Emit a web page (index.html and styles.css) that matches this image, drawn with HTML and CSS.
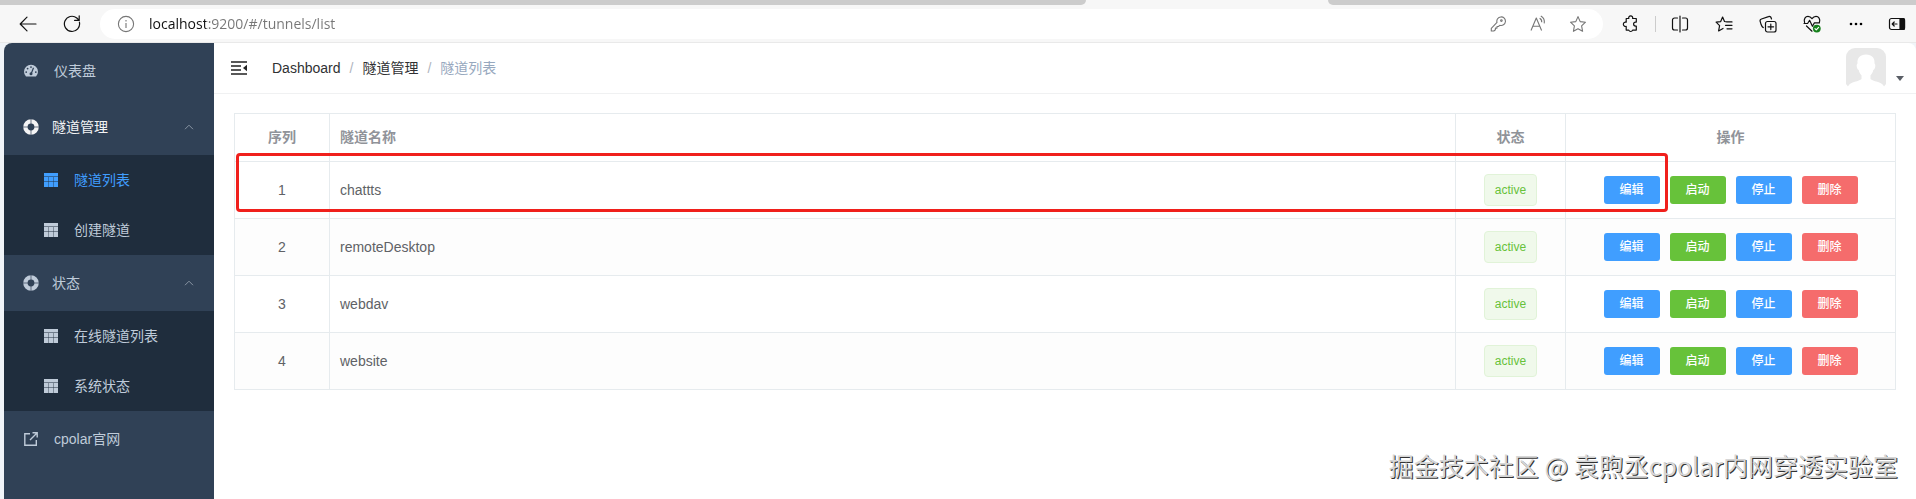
FILE: index.html
```html
<!DOCTYPE html>
<html lang="zh-CN">
<head>
<meta charset="utf-8">
<title>隧道列表</title>
<link rel="stylesheet" href="styles.css">
</head>
<body>
<svg class="defs" aria-hidden="true">
  <symbol id="grid" viewBox="0 0 14 14"><path fill="currentColor" d="M0 0h14v3.400H0zM0 4h4.400v4.600H0zM4.800 4h4.400v4.600H4.800zM9.600 4H14v4.600H9.600zM0 9h4.400v5H0zM4.800 9h4.400v5H4.800zM9.600 9H14v5H9.600z"/></symbol>
  <symbol id="ring" viewBox="0 0 16 16"><circle cx="8" cy="8" r="5.600" fill="none" stroke="currentColor" stroke-width="4.400"/><path d="M8 0v5M8 11v5M0 8h5M11 8h5" stroke="#304156" stroke-width=".7"/></symbol>
  <symbol id="up" viewBox="0 0 10 6"><path d="M1 5.200 5 1.200l4 4" fill="none" stroke="currentColor"/></symbol>
</svg>

<div class="tabstrip"><span class="tabs-left"></span><span class="tabs-right"></span></div>

<header class="toolbar">
  <button class="tool" aria-label="返回"><svg width="18" height="16" viewBox="0 0 18 16" class="line"><path d="M17 8H1.500M8 1.200 1.200 8 8 14.800"/></svg></button>
  <button class="tool" aria-label="刷新"><svg width="18" height="18" viewBox="0 0 18 18" class="line"><path d="M16.400 7.200A7.600 7.600 0 1 1 13.800 3L16 5.200M16.200.8v4.600h-4.600"/></svg></button>
  <div class="omnibox">
    <svg class="info" width="18" height="18" viewBox="0 0 18 18"><circle cx="9" cy="9" r="7.600"/><path d="M9 8v5M9 5v1.400"/></svg>
    <input class="url" type="text" aria-label="地址" value="localhost:9200/#/tunnels/list">
    <button class="field-tool" aria-label="密码"><svg width="16" height="16" viewBox="0 0 16 16"><path d="M7 6.400A4.300 4.300 0 1 1 9.800 9.300L8.400 10.500H7v1.600H5.400v1.600L3.800 15H1.300v-2.600z"/><circle cx="11.400" cy="4.600" r=".8"/></svg></button>
    <button class="field-tool" aria-label="朗读"><svg width="18" height="18" viewBox="0 0 18 18"><path d="M2 15.500 7.300 3l5.300 12.500M3.800 11.300h7M10.600 3.200a4 4 0 0 1 2.100 4M11.800 1a7 7 0 0 1 3.400 7.400"/></svg></button>
    <button class="field-tool" aria-label="收藏此页"><svg width="18" height="18" viewBox="0 0 18 18"><path d="m9 1.600 2.200 5 5.300.6-3.900 3.700 1 5.400L9 13.700l-4.600 2.600 1-5.400L1.500 7.200l5.300-.6z"/></svg></button>
  </div>
  <button class="tool" aria-label="扩展"><svg width="18" height="18" viewBox="0 0 18 18" class="line"><path d="M4.500 3.500h2.300a2 2 0 1 1 3.800 0h3.700v3.600h-.7a2 2 0 1 0 0 4h.7v4h-3.700a2 2 0 0 1-3.800 0H4.200v-3.700a2.200 2.200 0 1 1 0-4.200V3.500z"/></svg></button>
  <span class="divider"></span>
  <button class="tool" aria-label="分屏"><svg width="18" height="18" viewBox="0 0 18 18" class="line"><path d="M6.500 3H3.500a2 2 0 0 0-2 2v8a2 2 0 0 0 2 2h3M11.500 3h3a2 2 0 0 1 2 2v8a2 2 0 0 1-2 2h-3M9 1v16"/></svg></button>
  <button class="tool" aria-label="收藏夹"><svg width="18" height="18" viewBox="0 0 18 18" class="line"><path d="M12 6.900 9.500 6.500 7.600 2 5.700 6.600l-4.600.5 3.500 3.500-1 5.300 4.400-2.500M12 6.900h5M10.500 10.300H17M12 13.800h5"/></svg></button>
  <button class="tool" aria-label="集锦"><svg width="18" height="18" viewBox="0 0 18 18" class="line"><rect x="6.500" y="6.500" width="10.500" height="10.500" rx="2"/><path d="M11.800 9v5.600M9 11.800h5.600M4.300 12.600C3 12 2.600 11 2.200 9.800L1.200 6.500A2 2 0 0 1 2.500 4l7-2.400a2 2 0 0 1 2.600 1.200l.4 1.200"/></svg></button>
  <button class="tool" aria-label="浏览器概要"><svg width="18" height="18" viewBox="0 0 18 18" class="line"><path d="M1.600 7.500C.4 4 2.500 1.400 5 1.400c2 0 3.200 1.200 4 2.300.8-1.100 2-2.300 4-2.300 2.500 0 4.600 2.600 3.400 6.100M1 8.500h3.600l2-3.200 2.800 6 2-3.400h5M3.500 11 9 16.200"/><circle cx="13.800" cy="13.600" r="3.900" class="ok"/><path d="m12 13.600 1.300 1.300 2.300-2.500" class="tick"/></svg></button>
  <button class="tool" aria-label="更多"><svg width="14" height="4" viewBox="0 0 14 4"><circle cx="2" cy="2" r="1.300"/><circle cx="7" cy="2" r="1.300"/><circle cx="12" cy="2" r="1.300"/></svg></button>
  <button class="tool tool-last" aria-label="侧边栏"><svg width="18" height="14" viewBox="0 0 18 14" class="line"><rect x="1.500" y="1.500" width="15" height="11" rx="2"/><path d="M12 1.500h3.500a1 1 0 0 1 1 1v9a1 1 0 0 1-1 1H12z" fill="#111"/><path d="M9 7H4.200M6.200 5l-2 2 2 2"/></svg></button>
</header>

<div class="page">
  <nav class="sidebar">
    <a class="item" href="#/dashboard"><svg class="icon" viewBox="0 0 14 14"><path fill="currentColor" fill-rule="evenodd" d="M2 12.600A7 7 0 1 1 12 12.600zM7 2.200a.9.900 0 1 0 0 1.800.9.900 0 0 0 0-1.800M3.600 3.700a.9.900 0 1 0 0 1.800.9.900 0 0 0 0-1.800M2.200 7.200a.9.900 0 1 0 0 1.800.9.900 0 0 0 0-1.800M11.800 7.200a.9.900 0 1 0 0 1.800.9.900 0 0 0 0-1.800"/><path d="M9.500 3.800 7.300 9.500" stroke="#304156" stroke-width="1.200"/><circle cx="7" cy="9.800" r="1.500" fill="#304156"/></svg><span>仪表盘</span></a>
    <button class="item group current"><svg class="icon"><use href="#ring"/></svg><span>隧道管理</span><svg class="arrow"><use href="#up"/></svg></button>
    <div class="submenu">
      <a class="subitem active" href="#/tunnels/list"><svg class="icon"><use href="#grid"/></svg><span>隧道列表</span></a>
      <a class="subitem" href="#/tunnels/create"><svg class="icon"><use href="#grid"/></svg><span>创建隧道</span></a>
    </div>
    <button class="item group"><svg class="icon"><use href="#ring"/></svg><span>状态</span><svg class="arrow"><use href="#up"/></svg></button>
    <div class="submenu">
      <a class="subitem" href="#/status/online"><svg class="icon"><use href="#grid"/></svg><span>在线隧道列表</span></a>
      <a class="subitem" href="#/status/system"><svg class="icon"><use href="#grid"/></svg><span>系统状态</span></a>
    </div>
    <a class="item" href="#/site"><svg class="icon" viewBox="0 0 14 14"><path fill="none" stroke="currentColor" stroke-width="1.400" d="M6 1.700H.8v11.500h11.500V8M8.500.8h4.700v4.700M13 1 6 8"/></svg><span>cpolar官网</span></a>
  </nav>

  <main class="main">
    <div class="navbar">
      <button class="fold" aria-label="折叠菜单"><svg width="16" height="14" viewBox="0 0 16 14"><path d="M0 1h16M0 5h10M0 9h10M0 13h16" stroke="#222" stroke-width="1.600"/><path d="M16 3.800v6.400L12 7z" fill="#222"/></svg></button>
      <nav class="crumbs"><a href="#/dashboard">Dashboard</a><i>/</i><a href="#/tunnels">隧道管理</a><i>/</i><span>隧道列表</span></nav>
      <button class="user" aria-label="用户菜单">
        <svg width="40" height="40" viewBox="0 0 40 40"><path fill="#e8e8e8" d="M9 0h22a9 9 0 0 1 9 9v27l-2 2.500H2L0 36V9a9 9 0 0 1 9-9z"/><path fill="#fff" d="M20 6.500c-6 0-9 3.500-8.500 9-.1.500-1 .8-.8 2.500.2 2 .8 3.600 2 4 .5 2.500 1.500 4 2.800 5.300v3.700C13.500 33.500 4 33.500 2 38.500V40h36v-1.500c-2-5-11.500-5-13.500-7.500v-3.700c1.300-1.300 2.300-2.800 2.800-5.300 1.200-.4 1.800-2 2-4 .2-1.700-.7-2-.8-2.500.5-5.500-2.500-9-8.500-9z"/></svg>
        <svg class="caret" width="8" height="5" viewBox="0 0 8 5"><path d="M0 0h8L4 5z" fill="#5a5e66"/></svg>
      </button>
    </div>

    <div class="content">
      <table class="tunnels">
        <colgroup><col class="c-index"><col><col class="c-state"><col class="c-ops"></colgroup>
        <thead><tr><th>序列</th><th class="name">隧道名称</th><th>状态</th><th>操作</th></tr></thead>
        <tbody>
          <tr><td>1</td><td class="name">chattts</td><td><span class="tag">active</span></td><td><div class="ops"><button class="btn blue">编辑</button><button class="btn green">启动</button><button class="btn blue">停止</button><button class="btn red">删除</button></div></td></tr>
          <tr><td>2</td><td class="name">remoteDesktop</td><td><span class="tag">active</span></td><td><div class="ops"><button class="btn blue">编辑</button><button class="btn green">启动</button><button class="btn blue">停止</button><button class="btn red">删除</button></div></td></tr>
          <tr><td>3</td><td class="name">webdav</td><td><span class="tag">active</span></td><td><div class="ops"><button class="btn blue">编辑</button><button class="btn green">启动</button><button class="btn blue">停止</button><button class="btn red">删除</button></div></td></tr>
          <tr><td>4</td><td class="name">website</td><td><span class="tag">active</span></td><td><div class="ops"><button class="btn blue">编辑</button><button class="btn green">启动</button><button class="btn blue">停止</button><button class="btn red">删除</button></div></td></tr>
        </tbody>
      </table>
      <div class="marker"></div>
    </div>
  </main>
</div>
<div class="watermark">掘金技术社区 @ 袁煦丞cpolar内网穿透实验室</div>
</body>
</html>
```
FILE: styles.css
```css
* { box-sizing: border-box; }

body {
  margin: 0;
  min-height: 100vh;
  display: flex;
  flex-direction: column;
  background: #f0f4f8;
  font: 14px/20px "Liberation Sans", "Noto Sans CJK SC", sans-serif;
  color: #606266;
}

button { border: 0; background: none; padding: 0; font: inherit; color: inherit; }
a { color: inherit; text-decoration: none; }
svg { display: block; flex: none; }
.defs { display: none; }

/* browser frame */
.tabstrip { display: flex; justify-content: space-between; height: 5px; background: #f7f7f7; }
.tabs-left { width: 1086px; background: #ccc; border-bottom-right-radius: 5px; }
.tabs-right { width: 588px; background: #ccc; border-bottom-left-radius: 5px; }

.toolbar {
  display: flex;
  align-items: center;
  height: 38px;
  padding-left: 6px;
  background: #f7f7f7;
  border-bottom: 1px solid #e9e9e9;
}
.tool { width: 44px; height: 30px; display: flex; align-items: center; justify-content: center; flex: none; color: #111; }
.tool-last { width: 38px; }
.line { fill: none; stroke: #111; stroke-width: 1.2; stroke-linejoin: round; stroke-linecap: round; }
.line .ok { fill: #16801c; stroke: none; }
.line .tick { stroke: #fff; }
.divider { width: 1px; height: 16px; margin: 0 2px; background: #ccc; }
.omnibox {
  flex: 1;
  display: flex;
  align-items: center;
  height: 30px;
  margin: 0 6px;
  padding: 0 5px 0 17px;
  border-radius: 15px;
  background: #fff;
}
.info, .field-tool svg { fill: none; stroke: #767676; stroke-width: 1.1; stroke-linejoin: round; }
.url {
  flex: 1;
  min-width: 0;
  height: 24px;
  margin-left: 14px;
  padding: 0;
  border: 0;
  outline: 0;
  font: 14px/24px "Open Sans", sans-serif;
  color: transparent;
  background: linear-gradient(90deg, #111 57px, #767676 57px);
  -webkit-background-clip: text;
  background-clip: text;
}
.field-tool { width: 40px; height: 30px; display: flex; align-items: center; justify-content: center; }

/* application */
.page { flex: 1; display: flex; margin-left: 4px; border-radius: 8px 8px 0 0; overflow: hidden; background: #fff; }

.sidebar { width: 210px; flex: none; background: #304156; color: #bfcbd9; }
.item { display: flex; align-items: center; width: 100%; height: 56px; padding: 0 20px; gap: 16px; text-align: left; }
.item.group { padding-left: 19px; gap: 13px; }
.icon { width: 14px; height: 14px; }
.group .icon { width: 16px; height: 16px; }
.item.current { color: #f4f4f5; }
.arrow { width: 10px; height: 6px; margin-left: auto; color: #8793a2; }
.submenu { background: #1f2d3d; }
.subitem { display: flex; align-items: center; height: 50px; padding-left: 40px; gap: 16px; }
.subitem.active { color: #409eff; }

.main { flex: 1; min-width: 0; }
.navbar { display: flex; align-items: center; height: 51px; padding: 0 12px 0 17px; border-bottom: 1px solid #f0f1f2; }
.fold { margin-right: 25px; }
.crumbs { display: flex; flex: 1; color: #303133; }
.crumbs i { margin: 0 9px; font-style: normal; color: #b0b5be; }
.crumbs span { color: #97a8be; }
.user { display: flex; align-items: flex-end; gap: 10px; }
.caret { margin-bottom: 7px; }

.content { position: relative; margin: 19px 20px 20px; }
.tunnels { width: 100%; table-layout: fixed; border-collapse: collapse; text-align: center; }
.c-index { width: 95px; }
.c-state { width: 110px; }
.c-ops { width: 330px; }
.tunnels th, .tunnels td { padding: 0 10px; border: 1px solid #e6ebee; font-size: 14px; }
.tunnels th { height: 48px; padding-bottom: 2px; color: #909399; font-weight: 700; }
.tunnels td { height: 57px; }
.tunnels .name { text-align: left; }
.tunnels tbody tr:nth-child(even) { background: #fdfdfd; }

.tag {
  display: inline-block;
  height: 32px;
  padding: 0 10px;
  border: 1px solid #e1f3d8;
  border-radius: 4px;
  background: #f0f9eb;
  color: #67c23a;
  font-size: 12px;
  line-height: 30px;
  vertical-align: middle;
}
.ops { display: flex; justify-content: center; gap: 10px; }
.btn { width: 56px; height: 28px; border-radius: 3px; color: #fff; font-size: 12px; font-weight: 500; }
.blue { background: #409eff; }
.green { background: #67c23a; }
.red { background: #f56c6c; }

.marker { position: absolute; top: 40px; left: 2px; right: 228px; height: 59px; border: 3px solid #f0201c; border-radius: 4px; }

.watermark {
  position: absolute;
  right: 18px;
  bottom: 16px;
  font: 25px/36px "Noto Sans CJK SC", sans-serif;
  color: #d6d6d6;
  text-shadow: 1px 1px 0 #333;
}
```
